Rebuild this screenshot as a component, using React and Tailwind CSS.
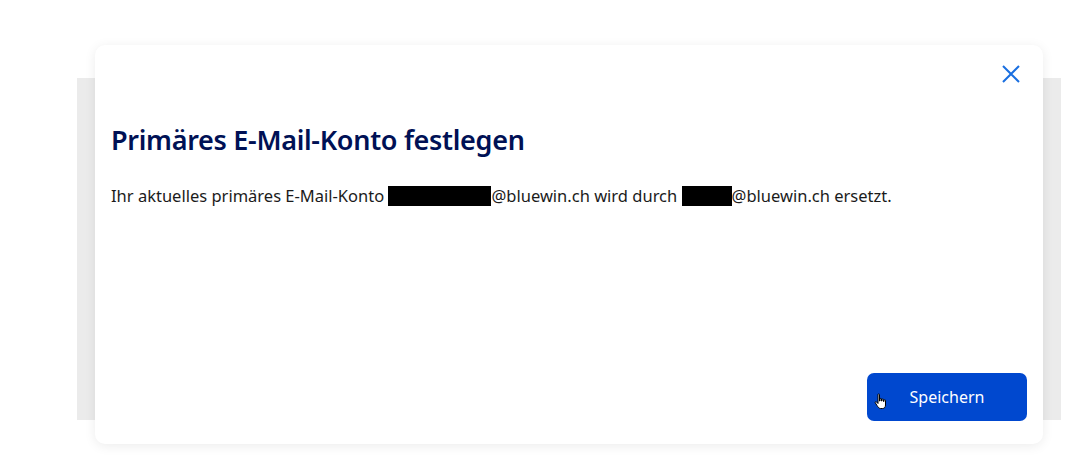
export default function App() {
  return (
    <div className="relative w-[1087px] h-[470px] bg-white overflow-hidden" style={{ fontFamily: '"Noto Sans", "Open Sans", sans-serif' }}>
      {/* background page panel */}
      <div className="absolute left-[77px] top-[78px] w-[984px] h-[342px] bg-[#ebebeb]" />

      {/* MODAL */}
      <div className="absolute left-[95px] top-[45px] w-[948px] h-[399px] bg-white rounded-[10px] shadow-[0_2px_12px_rgba(0,0,0,0.08)] flex flex-col px-4">
        <div className="flex justify-end pt-[19px] pr-[6px]">
          <button className="w-[20px] h-[20px] flex items-center justify-center text-[#1a6fe0]">
            <svg width="18" height="18" viewBox="0 0 18 18" fill="none" stroke="currentColor" strokeWidth="2">
              <path d="M1 1L17 17M17 1L1 17" />
            </svg>
          </button>
        </div>
        <h2 className="mt-[38px] text-[27px] leading-[36px] font-semibold text-[#001155] tracking-[-0.3px]">
          Primäres E-Mail-Konto festlegen
        </h2>
        <p className="mt-[27px] text-[16.5px] leading-[22px] text-[#1b1b1b] flex items-center">
          Ihr aktuelles primäres E-Mail-Konto&nbsp;
          <span className="inline-block w-[103px] h-[20px] bg-black" />
          @bluewin.ch wird durch&nbsp;
          <span className="inline-block w-[50px] h-[20px] bg-black" />
          @bluewin.ch ersetzt.
        </p>
        <div className="flex-1" />
        <div className="flex justify-end pb-[23px]">
          <button className="relative w-[160px] h-[48px] rounded-[7px] bg-[#0048cf] text-white text-[16px] font-normal">
            Speichern
            <svg className="absolute left-[7px] top-[20px]" width="16" height="17" viewBox="0 0 16 17">
              <path d="M4 1.5c0-.8 1.5-.8 1.5 0V8h.5V6c0-.8 1.5-.8 1.5 0v2h.5V6.6c0-.8 1.5-.8 1.5 0V8.5h.5V7.4c0-.8 1.5-.8 1.5 0V12c0 2-1 3.5-3 3.5H6.5C5 15.5 4 14 3 12.5L1.3 9.8c-.5-.8.6-1.6 1.2-.9L4 10.5z" fill="white" stroke="black" strokeWidth="1" />
            </svg>
          </button>
        </div>
      </div>
    </div>
  );
}
